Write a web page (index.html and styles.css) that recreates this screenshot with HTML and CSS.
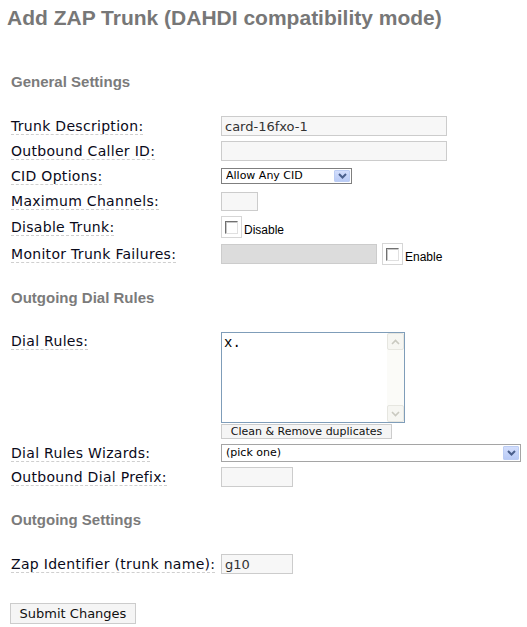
FILE: index.html
```html
<!DOCTYPE html>
<html>
<head>
<meta charset="utf-8">
<title>Add ZAP Trunk</title>
<link rel="stylesheet" href="styles.css">
</head>
<body>
<h2 class="title">Add ZAP Trunk (DAHDI compatibility mode)</h2>
<form class="form">
  <h5 class="section first">General Settings</h5>
  <div class="fields">
    <div class="row">
      <label class="label">Trunk Description:</label>
      <input class="text w-wide" type="text" value="card-16fxo-1">
    </div>
    <div class="row">
      <label class="label">Outbound Caller ID:</label>
      <input class="text w-wide" type="text" value="">
    </div>
    <div class="row">
      <label class="label">CID Options:</label>
      <span class="select w-cid">
        <select class="select-native"><option>Allow Any CID</option></select>
        <span class="select-btn"><svg width="9" height="6" viewBox="0 0 9 6"><path d="M1 1 L4.5 4.5 L8 1" fill="none" stroke="#4a5f8c" stroke-width="2"/></svg></span>
      </span>
    </div>
    <div class="row r-max">
      <label class="label">Maximum Channels:</label>
      <input class="text w-max" type="text" value="">
    </div>
    <div class="row r-check">
      <label class="label">Disable Trunk:</label>
      <span class="check-group">
        <span class="checkbox"><span class="check-box"></span></span>
        <span class="check-text">Disable</span>
      </span>
    </div>
    <div class="row r-check">
      <label class="label">Monitor Trunk Failures:</label>
      <span class="check-group">
        <input class="text w-monitor disabled" type="text" value="" disabled>
        <span class="checkbox gap"><span class="check-box"></span></span>
        <span class="check-text">Enable</span>
      </span>
    </div>
  </div>

  <h5 class="section">Outgoing Dial Rules</h5>
  <div class="fields">
    <div class="row top">
      <label class="label l-top">Dial Rules:</label>
      <div class="dial-col">
        <div class="textarea">
          <textarea class="textarea-native">x.</textarea>
          <div class="scrollbar">
            <span class="sb-btn"><svg width="9" height="6" viewBox="0 0 9 6"><path d="M1 5 L4.5 1.5 L8 5" fill="none" stroke="#c9c9c0" stroke-width="1.6"/></svg></span>
            <span class="sb-track"></span>
            <span class="sb-btn"><svg width="9" height="6" viewBox="0 0 9 6"><path d="M1 1 L4.5 4.5 L8 1" fill="none" stroke="#c9c9c0" stroke-width="1.6"/></svg></span>
          </div>
        </div>
        <button class="btn small" type="button">Clean &amp; Remove duplicates</button>
      </div>
    </div>
    <div class="row r-wiz">
      <label class="label">Dial Rules Wizards:</label>
      <span class="select w-wiz">
        <select class="select-native"><option>(pick one)</option></select>
        <span class="select-btn"><svg width="9" height="6" viewBox="0 0 9 6"><path d="M1 1 L4.5 4.5 L8 1" fill="none" stroke="#4a5f8c" stroke-width="2"/></svg></span>
      </span>
    </div>
    <div class="row">
      <label class="label">Outbound Dial Prefix:</label>
      <input class="text w-small" type="text" value="">
    </div>
  </div>

  <h5 class="section">Outgoing Settings</h5>
  <div class="fields">
    <div class="row">
      <label class="label">Zap Identifier (trunk name):</label>
      <input class="text w-small" type="text" value="g10">
    </div>
  </div>

  <div class="actions">
    <button class="btn submit" type="submit">Submit Changes</button>
  </div>
</form>
</body>
</html>
```

FILE: styles.css
```css
html, body {
  margin: 0;
  padding: 0;
  background: #ffffff;
}

body {
  font-family: "DejaVu Sans", Verdana, sans-serif;
  color: #000000;
}

.title {
  margin: 6px 0 0 0;
  padding-left: 7px;
  font-family: "Liberation Sans", Arial, sans-serif;
  font-weight: bold;
  font-size: 21px;
  line-height: 24px;
  color: #777777;
}

.form {
  padding-left: 11px;
  margin: 0;
}

.section {
  margin: 24px 0 0 0;
  font-family: "Liberation Sans", Arial, sans-serif;
  font-weight: bold;
  font-size: 15px;
  line-height: 18px;
  color: #7b7b7b;
}

.section.first {
  margin-top: 43px;
}

.fields {
  display: flex;
  flex-direction: column;
  gap: 5px;
  margin-top: 25px;
}

.row {
  display: grid;
  grid-template-columns: 210px auto;
  align-items: center;
  justify-items: start;
  min-height: 20px;
}

.row.top {
  align-items: start;
}

.label {
  font-size: 14px;
  line-height: 16px;
  letter-spacing: 0.3px;
  border-bottom: 1px dashed #cfcfcf;
  color: #0a0a1a;
  white-space: nowrap;
}

.l-top {
  margin-top: 1px;
}

.text {
  box-sizing: border-box;
  height: 20px;
  margin: 0;
  padding: 0 3px;
  border: 1px solid #cccccc;
  background: #f7f7f7;
  font-family: "DejaVu Sans", Verdana, sans-serif;
  font-size: 13px;
  color: #333333;
  outline: none;
}

.text.disabled {
  background: #dcdcdc;
}

.w-wide { width: 226px; }
.w-max { width: 37px; height: 19px; }
.w-small { width: 72px; }
.w-monitor { width: 156px; }

.select {
  box-sizing: border-box;
  display: flex;
  align-items: stretch;
  border: 1px solid #7f7f7f;
  background: #ffffff;
}

.w-cid {
  width: 131px;
  height: 16px;
}

.w-wiz {
  width: 300px;
  height: 18px;
  border-color: #a5a5a5;
}

.select-native {
  appearance: none;
  -webkit-appearance: none;
  flex: 1;
  min-width: 0;
  border: 0;
  margin: 0;
  padding: 0 0 0 4px;
  background: transparent;
  font-family: "DejaVu Sans", Verdana, sans-serif;
  font-size: 11px;
  line-height: 14px;
  color: #000;
  outline: none;
}

.select-btn {
  box-sizing: border-box;
  width: 16px;
  margin: 1px;
  display: flex;
  align-items: center;
  justify-content: center;
  background: linear-gradient(#d3defc, #b9cbf6);
  border: 1px solid #bccdf4;
  border-radius: 1px;
}

.check-group {
  display: flex;
  align-items: center;
}

.checkbox {
  box-sizing: border-box;
  width: 21px;
  height: 22px;
  border: 1px solid #d6d6d6;
  display: flex;
  align-items: center;
  justify-content: center;
}

.checkbox.gap {
  margin-left: 5px;
}

.check-box {
  box-sizing: border-box;
  width: 13px;
  height: 13px;
  background: #ffffff;
  border-top: 1px solid #707070;
  border-left: 1px solid #707070;
  border-right: 1px solid #e0e0e0;
  border-bottom: 1px solid #e0e0e0;
  box-shadow: inset 1px 1px 0 #c8c8c8;
}

.check-text {
  font-family: "Liberation Sans", Arial, sans-serif;
  font-size: 12px;
  line-height: 14px;
  margin-left: 2px;
  margin-top: 5px;
  color: #000;
}

.dial-col {
  display: flex;
  flex-direction: column;
  align-items: flex-start;
  gap: 1px;
}

.textarea {
  box-sizing: border-box;
  width: 184px;
  height: 91px;
  border: 1px solid #7f9db9;
  display: flex;
  background: #ffffff;
}

.textarea-native {
  flex: 1;
  border: 0;
  margin: 0;
  padding: 2px 2px;
  resize: none;
  overflow: hidden;
  font-family: "Liberation Mono", "Courier New", monospace;
  font-size: 14px;
  line-height: 16px;
  color: #000;
  outline: none;
  background: #ffffff;
}

.scrollbar {
  width: 17px;
  display: flex;
  flex-direction: column;
  background: #fbfbf8;
}

.sb-btn {
  box-sizing: border-box;
  height: 17px;
  border: 1px solid #e6e6e0;
  border-radius: 2px;
  background: #f6f6f2;
  display: flex;
  align-items: center;
  justify-content: center;
}

.sb-track {
  flex: 1;
}

.btn {
  box-sizing: border-box;
  margin: 0;
  border: 1px solid #cccccc;
  background: #f5f5f5;
  font-family: "DejaVu Sans", Verdana, sans-serif;
  color: #111;
  padding: 0;
}

.btn.small {
  width: 171px;
  height: 15px;
  font-size: 11px;
  line-height: 13px;
}

.r-wiz {
  min-height: 18px;
}

.actions {
  margin-top: 29px;
}

.btn.submit {
  width: 126px;
  height: 21px;
  font-size: 13px;
  margin-left: -1px;
}
```
